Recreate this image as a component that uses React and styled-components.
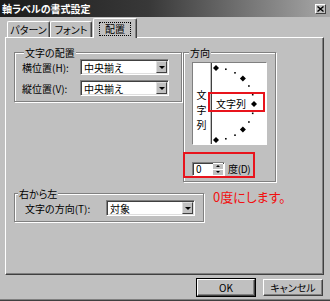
import React from 'react';
import styled, { createGlobalStyle } from 'styled-components';

const GlobalStyle = createGlobalStyle`
  body {
    margin: 0;
    background: #c0c0c0;
    font-family: "Noto Sans CJK JP", "Noto Sans", sans-serif;
    font-size: 10px;
    font-feature-settings: "palt";
    color: #000;
  }
`;

const Window = styled.div`
  width: 330px;
  height: 301px;
  box-sizing: border-box;
  background: #c0c0c0;
  border-bottom: 1px solid #404040;
  box-shadow: inset 0 -1px 0 #808080;
  display: flex;
  flex-direction: column;
`;

const TitleBar = styled.div`
  height: 17px;
  flex: none;
  display: flex;
  align-items: center;
  justify-content: space-between;
  padding: 0 4px 0 2px;
  background: linear-gradient(to right, #1c1c1c, #383838 45%, #a8a8a8);
  color: #fff;
  font-weight: bold;
  font-size: 10px;
`;

const CloseButton = styled.div`
  width: 11px;
  height: 10px;
  box-sizing: border-box;
  background: #c0c0c0;
  border-top: 1px solid #fff;
  border-left: 1px solid #fff;
  border-right: 1px solid #404040;
  border-bottom: 1px solid #404040;
  display: flex;
  align-items: center;
  justify-content: center;
`;

const Body = styled.div`
  flex: 1;
  padding: 1px 6px 0 5px;
  display: flex;
  flex-direction: column;
`;

const TabBar = styled.div`
  height: 19px;
  display: flex;
  align-items: flex-end;
  padding-left: 2px;
  position: relative;
  z-index: 1;
`;

const Tab = styled.div`
  width: ${p => p.$w}px;
  height: ${p => (p.$active ? 20 : 16)}px;
  margin-bottom: ${p => (p.$active ? -1 : 0)}px;
  margin-left: ${p => (p.$active ? 1 : 0)}px;
  box-sizing: border-box;
  background: #c0c0c0;
  border-top: 1px solid #fff;
  border-left: 1px solid #fff;
  border-right: 1px solid #404040;
  border-radius: 2px 2px 0 0;
  box-shadow: inset -1px 0 0 #808080;
  display: flex;
  align-items: ${p => (p.$active ? 'flex-start' : 'center')};
  justify-content: center;
  padding-top: ${p => (p.$active ? 4 : 0)}px;
  line-height: 12px;
`;

const FocusLabel = styled.span`
  outline: 1px dotted #000;
  padding: 0 5px;
`;

const Panel = styled.div`
  width: 319px;
  height: 238px;
  box-sizing: border-box;
  border-top: 1px solid #fff;
  border-left: 1px solid #fff;
  border-right: 1px solid #404040;
  border-bottom: 1px solid #404040;
  box-shadow: inset -1px -1px 0 #808080;
  padding: 7px 0 0 8px;
`;

const Row = styled.div`
  display: flex;
  align-items: flex-start;
  margin-top: ${p => p.$mt || 0}px;
`;

const Group = styled.div`
  position: relative;
  width: ${p => p.$w}px;
  height: ${p => (p.$h ? `${p.$h}px` : 'auto')};
  box-sizing: border-box;
  margin-top: 7px;
  margin-left: ${p => p.$ml || 0}px;
  border: 1px solid #808080;
  box-shadow: inset 1px 1px 0 #fff, 1px 1px 0 #fff;
  display: flex;
  flex-direction: column;
  padding: ${p => p.$pad};
`;

const Legend = styled.div`
  align-self: flex-start;
  margin: -7px 0 0 ${p => p.$ml}px;
  padding: 0 1px;
  line-height: 13px;
  background: #c0c0c0;
`;

const FieldRow = styled.div`
  display: flex;
  align-items: center;
  height: 16px;
  margin-top: ${p => p.$mt || 0}px;
`;

const FieldLabel = styled.div`
  width: ${p => p.$w}px;
  flex: none;
`;

const Combo = styled.div`
  width: ${p => p.$w}px;
  height: 16px;
  box-sizing: border-box;
  background: #fff;
  border-top: 1px solid #808080;
  border-left: 1px solid #808080;
  border-right: 1px solid #fff;
  border-bottom: 1px solid #fff;
  box-shadow: inset 1px 1px 0 #404040, inset -1px -1px 0 #dfdfdf;
  display: flex;
  align-items: center;
  justify-content: space-between;
  padding: 0 1px 0 3px;
`;

const DropButton = styled.div`
  width: 11px;
  height: 12px;
  box-sizing: border-box;
  background: #c0c0c0;
  border-top: 1px solid #dfdfdf;
  border-left: 1px solid #dfdfdf;
  border-right: 1px solid #404040;
  border-bottom: 1px solid #404040;
  display: flex;
  align-items: center;
  justify-content: center;

  &::after {
    content: '';
    border-left: 3px solid transparent;
    border-right: 3px solid transparent;
    border-top: 3px solid #000;
  }
`;

const Dial = styled.div`
  position: relative;
  width: 75px;
  height: 83px;
  margin-top: 3px;
  box-sizing: border-box;
  border-top: 1px solid #808080;
  border-left: 1px solid #808080;
  border-right: 1px solid #fff;
  border-bottom: 1px solid #fff;
  display: flex;
  background: #fff;
`;

const VerticalStrip = styled.div`
  width: 17px;
  flex: none;
  display: flex;
  flex-direction: column;
  align-items: center;
  padding-top: 24px;
  line-height: 15px;
  border-right: 1px solid #c0c0c0;
  box-shadow: 1px 0 0 #404040;
`;

const DialArea = styled.div`
  flex: 1;
  margin-left: 2px;
`;

const Mark = styled.div`
  position: absolute;
  left: ${p => p.$l}px;
  top: ${p => p.$t}px;
  width: ${p => p.$w}px;
  height: ${p => p.$h}px;
  box-sizing: border-box;
  border: 2px solid #e8141c;
  pointer-events: none;
`;

const SpinRow = styled.div`
  position: relative;
  display: flex;
  align-items: center;
  margin-top: 16px;
  gap: 3px;
`;

const SpinInput = styled.div`
  width: 33px;
  height: 14px;
  box-sizing: border-box;
  background: #fff;
  border-top: 1px solid #808080;
  border-left: 1px solid #808080;
  border-right: 1px solid #fff;
  border-bottom: 1px solid #fff;
  box-shadow: inset 1px 1px 0 #404040;
  display: flex;
  align-items: center;
  justify-content: space-between;
  padding: 0 1px 0 3px;
  line-height: 11px;
`;

const SpinButtons = styled.div`
  display: flex;
  flex-direction: column;
  width: 10px;
`;

const SpinButton = styled.div`
  height: 5px;
  background: #c0c0c0;
  border-top: 1px solid #fff;
  display: flex;
  align-items: center;
  justify-content: center;

  &::after {
    content: '';
    border-left: 2px solid transparent;
    border-right: 2px solid transparent;
    ${p => (p.$up ? 'border-bottom: 2px solid #000;' : 'border-top: 2px solid #000;')}
  }
`;

const Unit = styled.span`
  letter-spacing: -0.3px;
`;

const Note = styled.div`
  margin: 3px 0 0 9px;
  color: #f21010;
  font-size: 13px;
  line-height: 15px;
`;

const Footer = styled.div`
  display: flex;
  justify-content: flex-end;
  gap: 8px;
  margin-top: 4px;
  padding-right: 1px;
`;

const Button = styled.div`
  width: ${p => p.$w}px;
  height: 17px;
  box-sizing: border-box;
  background: #c0c0c0;
  border-top: 1px solid #fff;
  border-left: 1px solid #fff;
  border-right: 1px solid #404040;
  border-bottom: 1px solid #404040;
  box-shadow: inset -1px -1px 0 #808080${p => (p.$default ? ', 0 0 0 1px #000' : '')};
  display: flex;
  align-items: center;
  justify-content: center;
  line-height: 12px;
`;

const arcPoints = () => {
  const cx = 3;
  const cy = 41;
  const rx = 38;
  const ry = 36;
  const pts = [];
  for (let a = -90; a <= 90; a += 15) {
    const r = (a * Math.PI) / 180;
    pts.push({ x: cx + rx * Math.cos(r), y: cy + ry * Math.sin(r), big: a % 45 === 0 });
  }
  return pts;
};

const DialDrawing = () => (
  <svg width="53" height="81" viewBox="0 0 53 81">
    {arcPoints().map((p, i) => (p.big ? (
      <polygon
        key={i}
        points={`${p.x},${p.y - 3} ${p.x + 3},${p.y} ${p.x},${p.y + 3} ${p.x - 3},${p.y}`}
        fill="#000"
      />
    ) : (
      <rect key={i} x={p.x - 0.8} y={p.y - 0.8} width="1.6" height="1.6" fill="#000" />
    )))}
    <text x="3" y="45" fontSize="10" fontFamily="Noto Sans CJK JP, sans-serif">文字列</text>
  </svg>
);

const App = () => (
  <Window>
    <GlobalStyle />
    <TitleBar>
      <span>軸ラベルの書式設定</span>
      <CloseButton>
        <svg width="7" height="6" viewBox="0 0 7 6">
          <path d="M0.5 0.5 L6.5 5.5 M6.5 0.5 L0.5 5.5" stroke="#000" strokeWidth="1.4" />
        </svg>
      </CloseButton>
    </TitleBar>
    <Body>
      <TabBar>
        <Tab $w={43}>パターン</Tab>
        <Tab $w={42}>フォント</Tab>
        <Tab $w={44} $active><FocusLabel>配置</FocusLabel></Tab>
      </TabBar>
      <Panel>
        <Row>
          <Group $w={168} $pad="0 0 5px 7px">
            <Legend $ml={2}>文字の配置</Legend>
            <FieldRow>
              <FieldLabel $w={58}>横位置(H):</FieldLabel>
              <Combo $w={89}>中央揃え<DropButton /></Combo>
            </FieldRow>
            <FieldRow $mt={5}>
              <FieldLabel $w={58}>縦位置(V):</FieldLabel>
              <Combo $w={89}>中央揃え<DropButton /></Combo>
            </FieldRow>
          </Group>
          <Group $w={93} $h={130} $ml={1} $pad="0 0 0 8px">
            <Legend $ml={-3}>方向</Legend>
            <Dial>
              <VerticalStrip>
                <span>文</span>
                <span>字</span>
                <span>列</span>
              </VerticalStrip>
              <DialArea>
                <DialDrawing />
              </DialArea>
              <Mark $l={15} $t={29} $w={57} $h={20} />
            </Dial>
            <SpinRow>
              <SpinInput>
                0
                <SpinButtons>
                  <SpinButton $up />
                  <SpinButton />
                </SpinButtons>
              </SpinInput>
              <Unit>度(D)</Unit>
              <Mark $l={-9} $t={-9} $w={72} $h={26} />
            </SpinRow>
          </Group>
        </Row>
        <Row $mt={4}>
          <Group $w={190} $pad="0 0 5px 10px">
            <Legend $ml={-7}>右から左</Legend>
            <FieldRow>
              <FieldLabel $w={81}>文字の方向(T):</FieldLabel>
              <Combo $w={89}>対象<DropButton /></Combo>
            </FieldRow>
          </Group>
          <Note>0度にします。</Note>
        </Row>
      </Panel>
      <Footer>
        <Button $w={58} $default>OK</Button>
        <Button $w={60}>キャンセル</Button>
      </Footer>
    </Body>
  </Window>
);

export default App;
